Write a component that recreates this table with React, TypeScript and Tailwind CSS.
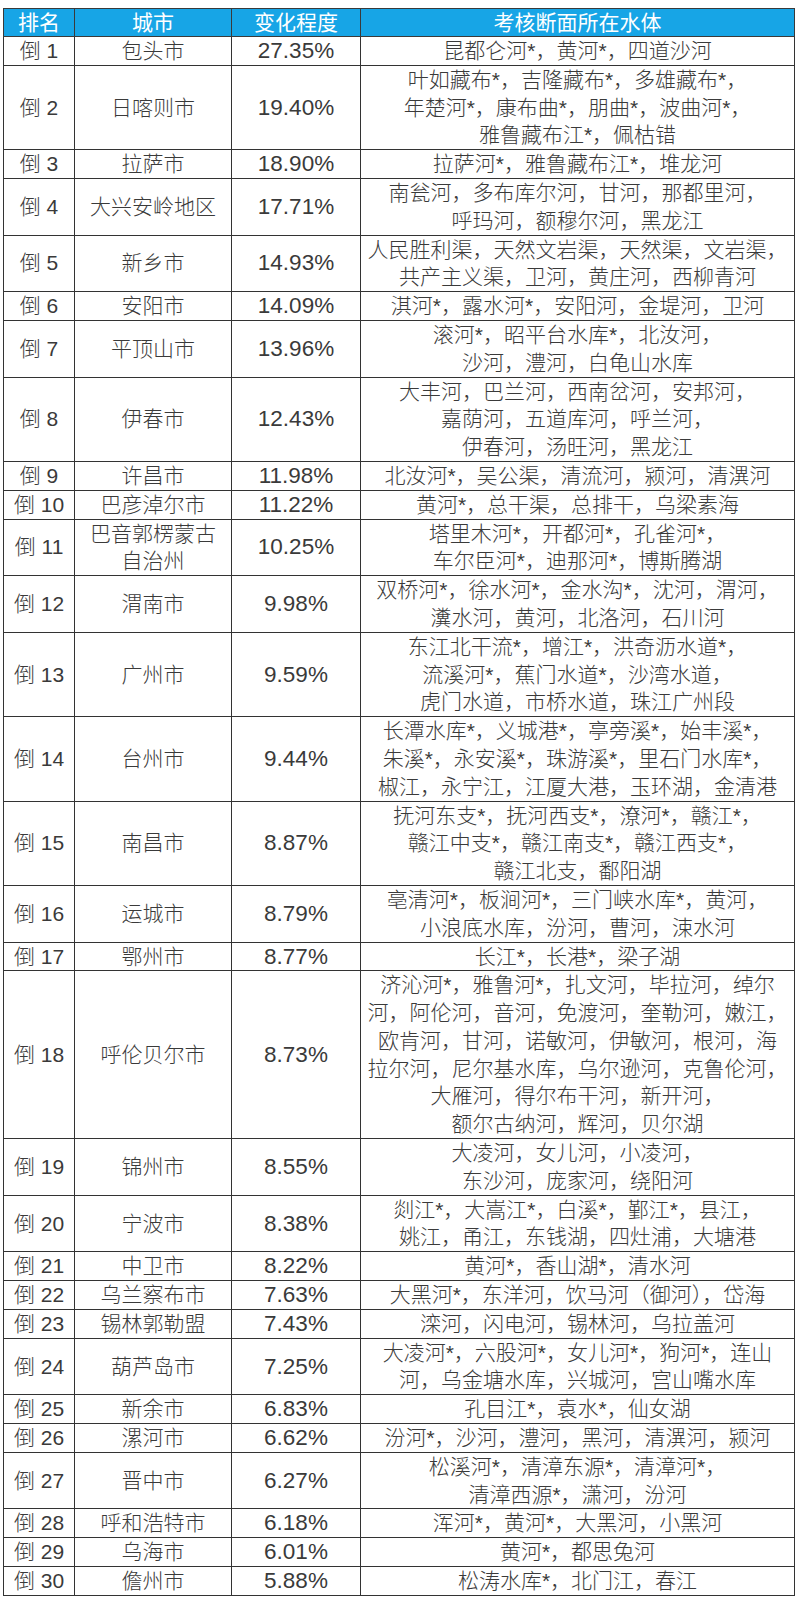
type Row = { rank: string; city: string[]; pct: string; water: string[] };

const rows: Row[] = [
  { rank: "倒 1", city: ["包头市"], pct: "27.35%", water: ["昆都仑河*，黄河*，四道沙河"] },
  { rank: "倒 2", city: ["日喀则市"], pct: "19.40%", water: ["叶如藏布*，吉隆藏布*，多雄藏布*，", "年楚河*，康布曲*，朋曲*，波曲河*，", "雅鲁藏布江*，佩枯错"] },
  { rank: "倒 3", city: ["拉萨市"], pct: "18.90%", water: ["拉萨河*，雅鲁藏布江*，堆龙河"] },
  { rank: "倒 4", city: ["大兴安岭地区"], pct: "17.71%", water: ["南瓮河，多布库尔河，甘河，那都里河，", "呼玛河，额穆尔河，黑龙江"] },
  { rank: "倒 5", city: ["新乡市"], pct: "14.93%", water: ["人民胜利渠，天然文岩渠，天然渠，文岩渠，", "共产主义渠，卫河，黄庄河，西柳青河"] },
  { rank: "倒 6", city: ["安阳市"], pct: "14.09%", water: ["淇河*，露水河*，安阳河，金堤河，卫河"] },
  { rank: "倒 7", city: ["平顶山市"], pct: "13.96%", water: ["滚河*，昭平台水库*，北汝河，", "沙河，澧河，白龟山水库"] },
  { rank: "倒 8", city: ["伊春市"], pct: "12.43%", water: ["大丰河，巴兰河，西南岔河，安邦河，", "嘉荫河，五道库河，呼兰河，", "伊春河，汤旺河，黑龙江"] },
  { rank: "倒 9", city: ["许昌市"], pct: "11.98%", water: ["北汝河*，吴公渠，清流河，颍河，清潩河"] },
  { rank: "倒 10", city: ["巴彦淖尔市"], pct: "11.22%", water: ["黄河*，总干渠，总排干，乌梁素海"] },
  { rank: "倒 11", city: ["巴音郭楞蒙古", "自治州"], pct: "10.25%", water: ["塔里木河*，开都河*，孔雀河*，", "车尔臣河*，迪那河*，博斯腾湖"] },
  { rank: "倒 12", city: ["渭南市"], pct: "9.98%", water: ["双桥河*，徐水河*，金水沟*，沈河，渭河，", "瀵水河，黄河，北洛河，石川河"] },
  { rank: "倒 13", city: ["广州市"], pct: "9.59%", water: ["东江北干流*，增江*，洪奇沥水道*，", "流溪河*，蕉门水道*，沙湾水道，", "虎门水道，市桥水道，珠江广州段"] },
  { rank: "倒 14", city: ["台州市"], pct: "9.44%", water: ["长潭水库*，义城港*，亭旁溪*，始丰溪*，", "朱溪*，永安溪*，珠游溪*，里石门水库*，", "椒江，永宁江，江厦大港，玉环湖，金清港"] },
  { rank: "倒 15", city: ["南昌市"], pct: "8.87%", water: ["抚河东支*，抚河西支*，潦河*，赣江*，", "赣江中支*，赣江南支*，赣江西支*，", "赣江北支，鄱阳湖"] },
  { rank: "倒 16", city: ["运城市"], pct: "8.79%", water: ["亳清河*，板涧河*，三门峡水库*，黄河，", "小浪底水库，汾河，曹河，涑水河"] },
  { rank: "倒 17", city: ["鄂州市"], pct: "8.77%", water: ["长江*，长港*，梁子湖"] },
  { rank: "倒 18", city: ["呼伦贝尔市"], pct: "8.73%", water: ["济沁河*，雅鲁河*，扎文河，毕拉河，绰尔", "河，阿伦河，音河，免渡河，奎勒河，嫩江，", "欧肯河，甘河，诺敏河，伊敏河，根河，海", "拉尔河，尼尔基水库，乌尔逊河，克鲁伦河，", "大雁河，得尔布干河，新开河，", "额尔古纳河，辉河，贝尔湖"] },
  { rank: "倒 19", city: ["锦州市"], pct: "8.55%", water: ["大凌河，女儿河，小凌河，", "东沙河，庞家河，绕阳河"] },
  { rank: "倒 20", city: ["宁波市"], pct: "8.38%", water: ["剡江*，大嵩江*，白溪*，鄞江*，县江，", "姚江，甬江，东钱湖，四灶浦，大塘港"] },
  { rank: "倒 21", city: ["中卫市"], pct: "8.22%", water: ["黄河*，香山湖*，清水河"] },
  { rank: "倒 22", city: ["乌兰察布市"], pct: "7.63%", water: ["大黑河*，东洋河，饮马河（御河），岱海"] },
  { rank: "倒 23", city: ["锡林郭勒盟"], pct: "7.43%", water: ["滦河，闪电河，锡林河，乌拉盖河"] },
  { rank: "倒 24", city: ["葫芦岛市"], pct: "7.25%", water: ["大凌河*，六股河*，女儿河*，狗河*，连山", "河，乌金塘水库，兴城河，宫山嘴水库"] },
  { rank: "倒 25", city: ["新余市"], pct: "6.83%", water: ["孔目江*，袁水*，仙女湖"] },
  { rank: "倒 26", city: ["漯河市"], pct: "6.62%", water: ["汾河*，沙河，澧河，黑河，清潩河，颍河"] },
  { rank: "倒 27", city: ["晋中市"], pct: "6.27%", water: ["松溪河*，清漳东源*，清漳河*，", "清漳西源*，潇河，汾河"] },
  { rank: "倒 28", city: ["呼和浩特市"], pct: "6.18%", water: ["浑河*，黄河*，大黑河，小黑河"] },
  { rank: "倒 29", city: ["乌海市"], pct: "6.01%", water: ["黄河*，都思兔河"] },
  { rank: "倒 30", city: ["儋州市"], pct: "5.88%", water: ["松涛水库*，北门江，春江"] },
];

// every text line gets a fixed box, so mixed latin/CJK metrics can't stretch rows
const Lines = ({ items }: { items: string[] }) => (
  <>
    {items.map((t, i) => (
      <div key={i} className="h-[27.8px] whitespace-nowrap leading-[27.8px]">{t}</div>
    ))}
  </>
);

const cell = "border border-[#333] p-0 text-center align-middle";

export default function App() {
  return (
    <div className="min-h-[1624px] w-[800px] bg-white pt-[8px] pl-[3px] font-['Liberation_Sans','Noto_Sans_CJK_SC',sans-serif] text-[#3a3a3a]">
      <table className="w-[791px] table-fixed border-collapse text-[21px] font-light">
        <colgroup>
          <col className="w-[71px]" />
          <col className="w-[157px]" />
          <col className="w-[129px]" />
          <col className="w-[434px]" />
        </colgroup>
        <thead>
          <tr className="bg-[#17a5e6] text-white">
            {["排名", "城市", "变化程度", "考核断面所在水体"].map((h) => (
              <th key={h} className="border border-[#3a3a3a] p-0 font-normal">
                <div className="h-[27px] leading-[27px] whitespace-nowrap">{h}</div>
              </th>
            ))}
          </tr>
        </thead>
        <tbody>
          {rows.map((r) => (
            <tr key={r.rank}>
              <td className={cell}>
                <Lines items={[r.rank]} />
              </td>
              <td className={cell}>
                <Lines items={r.city} />
              </td>
              <td className={`${cell} text-[22.5px]`}>
                <Lines items={[r.pct]} />
              </td>
              <td className={cell}>
                <Lines items={r.water} />
              </td>
            </tr>
          ))}
        </tbody>
      </table>
    </div>
  );
}
